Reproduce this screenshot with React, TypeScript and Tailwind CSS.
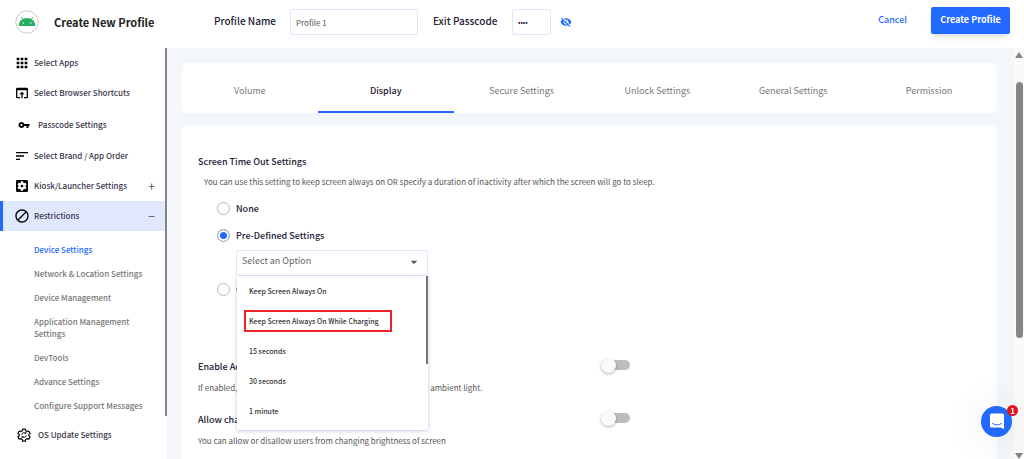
import { useState } from 'react';
import clsx from 'clsx';
import {
  MdApps,
  MdArrowDropDown,
  MdBlock,
  MdOpenInBrowser,
  MdSettingsApplications,
  MdSort,
  MdVisibilityOff,
  MdVpnKey,
} from 'react-icons/md';

const TABS = [
  'Volume',
  'Display',
  'Secure Settings',
  'Unlock Settings',
  'General Settings',
  'Permission',
];

const RESTRICTIONS = [
  'Device Settings',
  'Network & Location Settings',
  'Device Management',
  'Application Management Settings',
  'DevTools',
  'Advance Settings',
  'Configure Support Messages',
];

const TIMEOUTS = [
  'Keep Screen Always On',
  'Keep Screen Always On While Charging',
  '15 seconds',
  '30 seconds',
  '1 minute',
];

const AndroidLogo = () => (
  <svg viewBox="0 0 24 24" className="h-6 w-6 shrink-0">
    <circle cx="12" cy="12" r="11.2" fill="#fff" stroke="#c9c9c9" strokeWidth="1" />
    <path d="M3.6 16a8.4 8 0 0 1 16.8 0z" fill="#27ae60" />
    <path d="M6 7l2.200 3.200M18 7l-2.200 3.200" stroke="#27ae60" strokeWidth="0.8" />
    <circle cx="8.2" cy="13" r="0.7" fill="#fff" />
    <circle cx="15.8" cy="13" r="0.7" fill="#fff" />
  </svg>
);

const UpdateGearIcon = () => (
  <svg
    viewBox="0 0 24 24"
    className="h-[14px] w-[14px]"
    fill="none"
    stroke="currentColor"
    strokeWidth="2"
    strokeLinejoin="round"
  >
    <path d="M9.6 1.8h4.8l.6 3 2.2 1.3 2.9-1 2.4 4.1-2.3 2v2l2.3 2-2.4 4.1-2.9-1-2.2 1.3-.6 3H9.6l-.6-3-2.2-1.3-2.9 1-2.4-4.1 2.3-2v-2l-2.3-2 2.4-4.1 2.9 1L9 4.8z" />
    <path d="M8 11.5a4.2 4.2 0 0 1 7-2.5M16 12.5a4.2 4.2 0 0 1-7 2.5" strokeWidth="1.6" />
    <path d="M15.5 6.8v2.7h-2.7M8.5 17.2v-2.700h2.700" strokeWidth="1.4" />
  </svg>
);

interface NavItemProps {
  icon: React.ReactNode;
  label: string;
  sign?: string;
  active?: boolean;
  inset?: boolean;
}

const NavItem: React.FC<NavItemProps> = ({ icon, label, sign, active, inset }) => (
  <a
    href="#"
    className={clsx(
      'flex items-center border-l-3 pr-2.5',
      active ? 'border-[#2269ff] bg-[#e0e8fd]' : 'border-transparent',
      inset ? 'h-[33px] gap-[7px] pl-[14px]' : 'h-[30px] gap-[5px] pl-3',
    )}
  >
    <span className="flex w-[14px] shrink-0 justify-center text-black">{icon}</span>
    <span className="flex-1 whitespace-nowrap text-[8px] font-medium text-[#38364a]">{label}</span>
    {sign && <span className="text-xs text-[#555]">{sign}</span>}
  </a>
);

const Sidebar = () => (
  <aside className="flex w-[167px] shrink-0 bg-white">
    <nav className="min-w-0 flex-1">
      <NavItem icon={<MdApps className="h-4 w-4 shrink-0" />} label="Select Apps" />
      <NavItem
        icon={<MdOpenInBrowser className="h-4 w-4 shrink-0" />}
        label="Select Browser Shortcuts"
      />
      <NavItem inset icon={<MdVpnKey className="h-3 w-3" />} label="Passcode Settings" />
      <NavItem icon={<MdSort className="h-4 w-4 shrink-0" />} label="Select Brand / App Order" />
      <NavItem
        icon={<MdSettingsApplications className="h-4 w-4 shrink-0" />}
        label="Kiosk/Launcher Settings"
        sign="+"
      />
      <NavItem
        active
        icon={<MdBlock className="h-4 w-4 shrink-0" />}
        label="Restrictions"
        sign="−"
      />
      <ul className="pt-[7px] pr-5 pl-[34px]">
        {RESTRICTIONS.map((item, i) => (
          <li key={item} className="py-1.5">
            <a
              href="#"
              className={clsx(
                'block text-[8px] leading-3 font-medium',
                i === 0 ? 'text-[#2269ff]' : 'text-[#777]',
              )}
            >
              {item}
            </a>
          </li>
        ))}
      </ul>
      <NavItem inset icon={<UpdateGearIcon />} label="OS Update Settings" />
    </nav>
    <div className="h-[368px] w-0.5 bg-[#858585]" />
  </aside>
);

const Header = () => (
  <header className="flex h-12 shrink-0 items-center bg-white pr-[14px] pb-1 pl-[15px]">
    <div className="flex w-[199px] shrink-0 items-center gap-[15px]">
      <AndroidLogo />
      <h1 className="text-[11px] font-bold whitespace-nowrap text-[#222]">Create New Profile</h1>
    </div>
    <label
      htmlFor="profile-name"
      className="w-[76px] pb-1 text-[10px] font-medium whitespace-nowrap"
    >
      Profile Name
    </label>
    <input
      id="profile-name"
      defaultValue="Profile 1"
      className="h-[26px] w-32 rounded-xs border border-[#dfe8fd] px-[5px] text-[8px] text-[#555]"
    />
    <label
      htmlFor="passcode"
      className="ml-[15px] w-[79px] pb-1 text-[10px] font-medium whitespace-nowrap"
    >
      Exit Passcode
    </label>
    <input
      id="passcode"
      type="password"
      defaultValue="1234"
      className="h-[26px] w-[39px] rounded-xs border border-[#dfe8fd] px-[5px] text-[7px]"
    />
    <button aria-label="Show passcode" className="ml-[9px] text-[#2269ff]">
      <MdVisibilityOff className="h-3 w-3" />
    </button>
    <button className="mr-6 ml-auto pb-1 text-[9px] font-medium text-[#2269ff]">Cancel</button>
    <button className="mb-1 h-[27px] w-[79px] rounded-xs bg-[#2269ff] text-[9px] font-bold whitespace-nowrap text-white shadow-md">
      Create Profile
    </button>
  </header>
);

interface RadioProps {
  label: string;
  checked: boolean;
  onChange: () => void;
}

const Radio: React.FC<RadioProps> = ({ label, checked, onChange }) => (
  <label className="flex h-[27px] items-center gap-1.5 text-[9px] font-medium">
    <input
      type="radio"
      name="timeout"
      checked={checked}
      onChange={onChange}
      className="h-[13px] w-[13px] appearance-none rounded-full border border-[#b5b5b5] bg-white checked:bg-[#2269ff] checked:shadow-[inset_0_0_0_2px_#fff]"
    />
    {label}
  </label>
);

interface ToggleRowProps {
  id: string;
  title: string;
  text: string;
}

const ToggleRow: React.FC<ToggleRowProps> = ({ id, title, text }) => (
  <div className="flex h-[53px] items-start">
    <div className="w-[403px] shrink-0">
      <label htmlFor={id} className="block text-[9px] leading-[21px] font-medium whitespace-nowrap">
        {title}
      </label>
      <p className="text-[8px] leading-[21px] whitespace-nowrap text-[#555]">{text}</p>
    </div>
    <input
      id={id}
      type="checkbox"
      role="switch"
      className="mt-1 flex h-[10px] w-[29px] appearance-none items-center rounded-full bg-[#bdbdbd] before:h-[15px] before:w-[15px] before:shrink-0 before:rounded-full before:bg-[#fafafa] before:shadow-[0_1px_3px_rgba(0,0,0,0.3)]"
    />
  </div>
);

const TimeoutSelect = () => (
  <div className="relative mt-px ml-[38px] w-48">
    <select
      aria-label="Screen time out"
      className="block h-[26px] w-full appearance-none rounded-xs border border-[#dfe8fd] bg-white px-[5px] pb-1 text-[9px] text-[#666]"
    >
      <option>Select an Option</option>
    </select>
    <MdArrowDropDown className="pointer-events-none absolute top-1 right-1.5 h-4 w-4 text-[#555]" />
    <ul
      role="listbox"
      className="absolute top-full right-0 left-px z-10 border-r-2 border-white bg-white pb-1 shadow-[0_1px_4px_rgba(80,100,160,0.35)]"
    >
      {TIMEOUTS.map((item, i) => (
        <li
          key={item}
          role="option"
          aria-selected={false}
          className="flex h-[30px] items-center pl-[7px]"
        >
          <span
            className={clsx(
              'border-2 pl-[3px] text-[7px] leading-[18px] font-medium whitespace-nowrap text-[#333]',
              i === 1 ? 'border-[#ec2227] pr-[11px]' : 'border-transparent',
            )}
          >
            {item}
          </span>
        </li>
      ))}
      <li role="presentation" className="absolute top-0 -right-0.5 h-[88px] w-0.5 bg-[#777]" />
    </ul>
  </div>
);

const DisplaySettings = () => {
  const [mode, setMode] = useState('predefined');
  return (
    <section className="flex-1 rounded-t-md bg-white px-4 pt-[27px]">
      <h2 className="text-[9px] leading-5 font-medium">Screen Time Out Settings</h2>
      <p className="pl-1.5 text-[8px] leading-5 whitespace-nowrap text-[#555]">
        You can use this setting to keep screen always on OR specify a duration of inactivity after
        which the screen will go to sleep.
      </p>
      <div className="pt-[3px] pl-[19px]">
        <Radio label="None" checked={mode === 'none'} onChange={() => setMode('none')} />
        <Radio
          label="Pre-Defined Settings"
          checked={mode === 'predefined'}
          onChange={() => setMode('predefined')}
        />
      </div>
      <TimeoutSelect />
      <div className="pb-[53px] pl-[19px]">
        <Radio label="Custom" checked={mode === 'custom'} onChange={() => setMode('custom')} />
      </div>
      <ToggleRow
        id="adaptive"
        title="Enable Adaptive Brightness"
        text="If enabled, the screen brightness will be customized as per the ambient light."
      />
      <ToggleRow
        id="brightness"
        title="Allow changing brightness"
        text="You can allow or disallow users from changing brightness of screen"
      />
    </section>
  );
};

const ChatButton = () => (
  <button
    aria-label="Open chat"
    className="fixed right-3 bottom-[22px] z-20 flex h-[31px] w-[31px] items-center justify-center rounded-full bg-[#2269ff] shadow-[0_2px_40px_rgba(0,0,0,0.12)]"
  >
    <svg viewBox="0 0 16 17" className="h-[17px] w-4">
      <path
        d="M2.5.5h11A1.5 1.5 0 0 1 15 2v14l-3.5-1.5h-9A1.5 1.5 0 0 1 1 13V2A1.5 1.5 0 0 1 2.5.5z"
        fill="#fff"
      />
      <path d="M3.5 10.5q4.5 3 9 0" fill="none" stroke="#2269ff" strokeLinecap="round" />
    </svg>
    <span className="absolute -top-px -right-1.5 h-[11px] w-[11px] rounded-full bg-[#e3131f] text-[8px] leading-[11px] font-bold text-white">
      1
    </span>
  </button>
);

const PageScrollbar = () => (
  <div className="flex w-[10px] shrink-0 flex-col items-center bg-[#fafafa] pt-1 text-[#858585]">
    <svg viewBox="0 0 8 6" className="h-1.5 w-2">
      <path d="M4 0l4 6H0z" fill="currentColor" />
    </svg>
    <div className="mt-6 h-[63%] w-[7px] rounded-full bg-[#858585]" />
    <svg viewBox="0 0 8 6" className="mt-auto h-1.5 w-2">
      <path d="M0 0h8L4 6z" fill="currentColor" />
    </svg>
  </div>
);

const App = () => (
  <div className="flex h-screen flex-col overflow-hidden bg-white font-['Noto_Sans_CJK_JP','Noto_Sans',sans-serif] text-[#222033]">
    <Header />
    <div className="flex min-h-0 flex-1">
      <Sidebar />
      <main className="flex min-w-0 flex-1 flex-col gap-3 bg-[#f3f7fc] pt-[15px] pr-[17px] pl-[15px]">
        <div role="tablist" className="grid h-[50px] shrink-0 grid-cols-6 rounded-md bg-white">
          {TABS.map((tab) => (
            <button
              key={tab}
              role="tab"
              aria-selected={tab === 'Display'}
              className={clsx(
                'border-b-2 pt-2 text-[9px]',
                tab === 'Display'
                  ? 'border-[#2269ff] font-medium'
                  : 'border-transparent text-[#777]',
              )}
            >
              {tab}
            </button>
          ))}
        </div>
        <DisplaySettings />
      </main>
      <PageScrollbar />
    </div>
    <ChatButton />
  </div>
);

export default App;
